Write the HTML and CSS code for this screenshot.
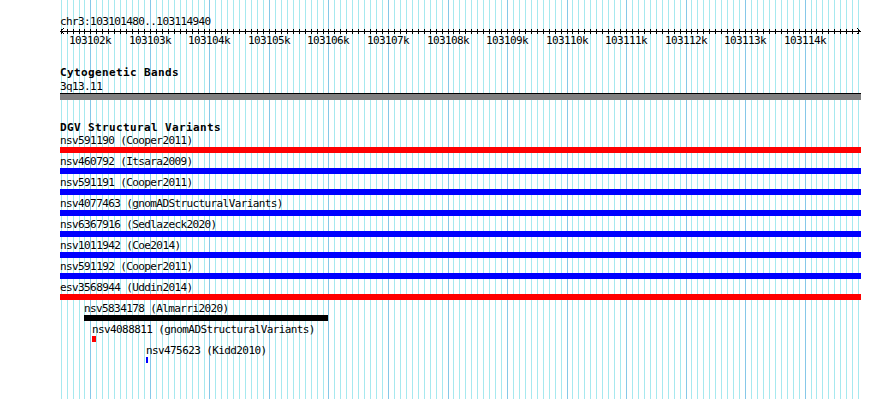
FILE: index.html
```html
<!DOCTYPE html>
<html lang="en">
<head>
    <meta charset="UTF-8">
    <meta name="viewport" content="width=device-width, initial-scale=1.0">
    <title>chr3:103101480..103114940</title>
    <link rel="stylesheet" href="styles.css">
</head>
<body>
    <div class="view">
        <div class="grid" id="grid"></div>
        <div class="content">
            <div class="locus">chr3:103101480..103114940</div>
            <svg class="ruler" id="ruler" width="801" height="7" shape-rendering="crispEdges"></svg>
            <div class="ruler-labels" id="rulerLabels"></div>

            <div class="track-title cyto">Cytogenetic Bands</div>
            <div class="feature-label">3q13.11</div>
            <div class="band"></div>

            <div class="track-title dgv">DGV Structural Variants</div>
            <div class="feature">
                <div class="feature-label">nsv591190 (Cooper2011)</div>
                <div class="bar red"></div>
            </div>
            <div class="feature">
                <div class="feature-label">nsv460792 (Itsara2009)</div>
                <div class="bar blue"></div>
            </div>
            <div class="feature">
                <div class="feature-label">nsv591191 (Cooper2011)</div>
                <div class="bar blue"></div>
            </div>
            <div class="feature">
                <div class="feature-label">nsv4077463 (gnomADStructuralVariants)</div>
                <div class="bar blue"></div>
            </div>
            <div class="feature">
                <div class="feature-label">nsv6367916 (Sedlazeck2020)</div>
                <div class="bar blue"></div>
            </div>
            <div class="feature">
                <div class="feature-label">nsv1011942 (Coe2014)</div>
                <div class="bar blue"></div>
            </div>
            <div class="feature">
                <div class="feature-label">nsv591192 (Cooper2011)</div>
                <div class="bar blue"></div>
            </div>
            <div class="feature">
                <div class="feature-label">esv3568944 (Uddin2014)</div>
                <div class="bar red"></div>
            </div>
            <div class="feature" style="margin-left: 24px">
                <div class="feature-label">nsv5834178 (Almarri2020)</div>
                <div class="bar black" style="width: 244px"></div>
            </div>
            <div class="feature" style="margin-left: 32px">
                <div class="feature-label">nsv4088811 (gnomADStructuralVariants)</div>
                <div class="bar red" style="width: 4px"></div>
            </div>
            <div class="feature" style="margin-left: 86px">
                <div class="feature-label">nsv475623 (Kidd2010)</div>
                <div class="bar blue" style="width: 2px"></div>
            </div>
        </div>
    </div>

    <script>
        const start = 103101480;
        const end = 103114940;
        const width = 801;
        const scale = width / (end - start);

        function px(bp) {
            return Math.floor((bp - start) * scale);
        }

        const grid = document.getElementById('grid');
        const ruler = document.getElementById('ruler');
        const rulerLabels = document.getElementById('rulerLabels');
        let svg = '<rect x="0" y="3" width="801" height="1" fill="#000"/>';

        for (let bp = Math.ceil(start / 100) * 100; bp <= end; bp += 100) {
            const x = px(bp);
            const line = document.createElement('div');
            line.className = bp % 1000 === 0 ? 'grid-line major' : 'grid-line';
            line.style.left = x + 'px';
            grid.appendChild(line);

            svg += '<rect x="' + x + '" y="1" width="1" height="5" fill="#000"/>';

            if (bp % 1000 === 0) {
                const label = document.createElement('span');
                label.innerText = (bp / 1000) + 'k';
                label.style.left = x + 'px';
                rulerLabels.appendChild(label);
            }
        }

        // pijlen aan beide uiteinden
        svg += '<polyline points="4,0 1,3 4,6" fill="none" stroke="#000" stroke-width="1"/>';
        svg += '<polyline points="797,0 800,3 797,6" fill="none" stroke="#000" stroke-width="1"/>';
        ruler.innerHTML = svg;
    </script>
</body>
</html>
```

FILE: styles.css
```css
body {
    margin: 0;
    background-color: #fff;
    color: #000;
    font-family: "DejaVu Sans Mono", "Liberation Mono", monospace;
    font-size: 11px;
    letter-spacing: -0.6px;
}
.view {
    position: relative;
    margin-left: 60px;
    width: 801px;
    height: 399px;
}
.grid {
    position: absolute;
    top: 0;
    left: 0;
    width: 801px;
    height: 399px;
}
.grid-line {
    position: absolute;
    top: 0;
    bottom: 0;
    width: 1px;
    background-color: #a6e9ef;
}
.grid-line.major {
    background-color: #86c8e8;
}
.content {
    position: relative;
    padding-top: 16px;
}
.locus {
    height: 12px;
    line-height: 12px;
}
.ruler {
    display: block;
}
.ruler-labels {
    position: relative;
    height: 12px;
    line-height: 12px;
}
.ruler-labels span {
    position: absolute;
    top: 0;
    width: 60px;
    margin-left: -30px;
    text-align: center;
}
.track-title {
    font-weight: bold;
    letter-spacing: 0.38px;
    height: 12px;
    line-height: 12px;
}
.track-title.cyto {
    margin-top: 20px;
    margin-bottom: 2px;
}
.track-title.dgv {
    margin-top: 22px;
    margin-bottom: 1px;
}
.band {
    height: 6px;
    background-color: #808080;
    border-top: 1px solid #000;
}
.feature-label {
    height: 12px;
    line-height: 12px;
    white-space: nowrap;
}
.bar {
    height: 6px;
    margin-bottom: 3px;
}
.bar.red {
    background-color: #ff0000;
}
.bar.blue {
    background-color: #0000ff;
}
.bar.black {
    background-color: #000;
}
```
